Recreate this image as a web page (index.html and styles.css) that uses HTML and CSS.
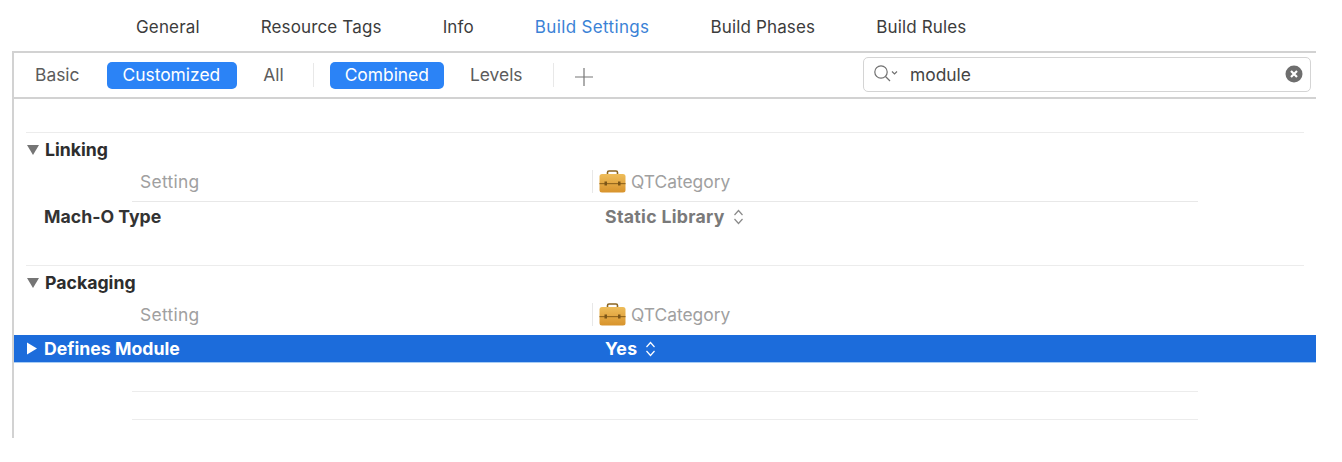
FILE: index.html
```html
<!DOCTYPE html>
<html lang="en">
<head>
  <meta charset="UTF-8" />
  <title>Build Settings</title>
  <link rel="stylesheet" href="styles.css">
</head>
<body>
  <nav class="tabs">
    <span class="tab">General</span>
    <span class="tab">Resource Tags</span>
    <span class="tab">Info</span>
    <span class="tab tab-active">Build Settings</span>
    <span class="tab">Build Phases</span>
    <span class="tab">Build Rules</span>
  </nav>

  <div class="panel">
    <div class="toolbar">
      <span class="filter filter-basic">Basic</span>
      <span class="filter filter-on filter-wide">Customized</span>
      <span class="filter filter-all">All</span>
      <span class="divider"></span>
      <span class="filter filter-on">Combined</span>
      <span class="filter filter-levels">Levels</span>
      <span class="divider divider-plus"></span>
      <svg class="plus" width="20" height="20" viewBox="0 0 20 20"><path d="M10 1v18M1 10h18" stroke="#777" stroke-width="1.2" fill="none"/></svg>
      <div class="search">
        <svg class="search-icon" width="26" height="20" viewBox="0 0 26 20">
          <circle cx="8" cy="8" r="6.2" stroke="#707070" stroke-width="1.2" fill="none"/>
          <path d="M12.500 12.500l4.500 4.500" stroke="#707070" stroke-width="1.300" fill="none"/>
          <path d="M19 7.500l2.500 2.500 2.500-2.500" stroke="#707070" stroke-width="1.200" fill="none"/>
        </svg>
        <span class="search-text">module</span>
        <svg class="search-clear" width="18" height="18" viewBox="0 0 18 18">
          <circle cx="9" cy="9" r="8.500" fill="#6e6e6e"/>
          <path d="M6 6l6 6M12 6l-6 6" stroke="#fff" stroke-width="2.200" fill="none"/>
        </svg>
      </div>
    </div>

    <div class="content">
      <section class="group">
        <div class="group-title">
          <svg class="arrow" width="12" height="12" viewBox="0 0 12 12"><path d="M0 1h12L6 11z" fill="#757575"/></svg>
          <span>Linking</span>
        </div>
        <div class="head-row">
          <span class="col-setting">Setting</span>
          <span class="col-target">
            <svg class="case" width="27" height="23" viewBox="0 0 27 23">
              <defs>
                <linearGradient id="caseFill" x1="0" y1="0" x2="0" y2="1">
                  <stop offset="0" stop-color="#eebd5a"/>
                  <stop offset="1" stop-color="#d8932c"/>
                </linearGradient>
              </defs>
              <path d="M8.500 5V2.500Q8.500 1 10 1h7Q18.500 1 18.500 2.500V5" stroke="#8a6420" stroke-width="1.600" fill="none"/>
              <rect x="0.500" y="4" width="26" height="18.500" rx="2.500" fill="url(#caseFill)"/>
              <rect x="0.500" y="13" width="26" height="1.200" fill="#96691f"/>
              <rect x="5.500" y="11.500" width="2.500" height="4" fill="#7a5518"/>
              <rect x="19" y="11.500" width="2.500" height="4" fill="#7a5518"/>
            </svg>
            QTCategory
          </span>
        </div>
        <div class="row">
          <span class="row-name">Mach-O Type</span>
          <span class="row-value">Static Library
            <svg class="stepper" width="11" height="16" viewBox="0 0 11 16"><path d="M1.500 6l4-4.500 4 4.500M1.500 10l4 4.500 4-4.500" stroke="#8a8a8a" stroke-width="1.200" fill="none"/></svg>
          </span>
        </div>
      </section>

      <section class="group">
        <div class="group-title">
          <svg class="arrow" width="12" height="12" viewBox="0 0 12 12"><path d="M0 1h12L6 11z" fill="#757575"/></svg>
          <span>Packaging</span>
        </div>
        <div class="head-row head-row-selected">
          <span class="col-setting">Setting</span>
          <span class="col-target">
            <svg class="case" width="27" height="23" viewBox="0 0 27 23">
              <path d="M8.500 5V2.500Q8.500 1 10 1h7Q18.500 1 18.500 2.500V5" stroke="#8a6420" stroke-width="1.600" fill="none"/>
              <rect x="0.500" y="4" width="26" height="18.500" rx="2.500" fill="url(#caseFill)"/>
              <rect x="0.500" y="13" width="26" height="1.200" fill="#96691f"/>
              <rect x="5.500" y="11.500" width="2.500" height="4" fill="#7a5518"/>
              <rect x="19" y="11.500" width="2.500" height="4" fill="#7a5518"/>
            </svg>
            QTCategory
          </span>
        </div>
        <div class="row row-selected">
          <svg class="arrow-right" width="12" height="13" viewBox="0 0 12 13"><path d="M1 0.500l10 6-10 6z" fill="#fff"/></svg>
          <span class="row-name">Defines Module</span>
          <span class="row-value">Yes
            <svg class="stepper" width="11" height="16" viewBox="0 0 11 16"><path d="M1.500 6l4-4.500 4 4.500M1.500 10l4 4.500 4-4.500" stroke="#fff" stroke-width="1.200" fill="none"/></svg>
          </span>
        </div>
        <div class="blank-row"></div>
        <div class="blank-row blank-row-last"></div>
      </section>
    </div>
  </div>
</body>
</html>
```

FILE: styles.css
```css
* {
  box-sizing: border-box;
}

body {
  margin: 0;
  height: 462px;
  overflow: hidden;
  background: #fff;
  font-family: "Inter", "Liberation Sans", sans-serif;
  font-size: 17.4px;
  color: #3c3c3c;
}

.tabs {
  display: flex;
  gap: 61px;
  height: 51px;
  padding: 16px 0 0 136px;
  line-height: 22px;
  font-size: 17px;
  letter-spacing: 0.15px;
}

.tab-active {
  color: #3a82d6;
  letter-spacing: 0.35px;
}

.panel {
  width: 1304px;
  margin-left: 12px;
  height: 387px;
  border-left: 2px solid #d2d2d2;
  border-top: 2px solid #d2d2d2;
}

.toolbar {
  display: flex;
  align-items: center;
  height: 46px;
  border-bottom: 2px solid #d2d2d2;
  color: #5c5c5c;
  padding: 0 5px 0 21px;
}

.filter {
  height: 27px;
  line-height: 26px;
  border-radius: 5px;
}

.filter-basic { margin-right: 28px; }
.filter-all { margin: 0 29px 0 26px; }
.filter-levels { margin: 0 30px 0 26px; }

.filter-on {
  padding: 0 15px;
  background: #2b83f6;
  color: #fff;
}

.filter-wide {
  padding-right: 17px;
}

.divider {
  width: 1px;
  height: 24px;
  background: #e8e8e8;
  margin-right: 16px;
}

.divider-plus {
  margin-right: 20px;
}

.plus {
  margin-top: 3px;
}

.search {
  display: flex;
  align-items: center;
  width: 448px;
  height: 35px;
  margin: 0 0 2px auto;
  padding: 0 7px 0 9px;
  border: 1px solid #d4d4d4;
  border-radius: 5px;
  background: #fff;
}

.search-text {
  margin-left: 11px;
  color: #444;
}

.search-clear {
  margin-left: auto;
}

.content {
  padding-top: 33px;
}

.group {
  border-top: 1px solid #ececec;
  margin: 0 12px;
  height: 133px;
}

.group-title {
  display: flex;
  align-items: center;
  height: 33px;
  padding-left: 1px;
  font-weight: 700;
  font-size: 17.7px;
  color: #2d2d2d;
}

.arrow {
  margin-right: 6px;
}

.head-row {
  display: flex;
  align-items: center;
  height: 36px;
  padding-bottom: 4px;
  margin: 0 106px 0 106px;
  border-bottom: 1px solid #e8e8e8;
  color: #a0a0a0;
}

.col-setting {
  width: 460px;
  padding-left: 8px;
  letter-spacing: 0.3px;
}

.col-target {
  display: flex;
  align-items: center;
  gap: 5px;
  border-left: 1px solid #e8e8e8;
  padding-left: 6px;
}

.row {
  display: flex;
  align-items: center;
  height: 29px;
  margin-right: 106px;
  font-weight: 700;
  font-size: 17.7px;
  color: #333;
}

.row-name {
  width: 579px;
  padding-left: 18px;
  flex: none;
}

.row-value {
  display: flex;
  align-items: center;
  gap: 8px;
  color: #7a7a7a;
  letter-spacing: 0.3px;
}

.head-row-selected {
  padding-bottom: 5px;
  border-bottom: none;
}

.row-selected {
  height: 28px;
  margin: 0 -12px;
  padding-left: 12px;
  background: #1c6cdb;
  border-bottom: 1px solid #a8cdf5;
  color: #fff;
}

.row-selected .row-name {
  width: 567px;
  padding-left: 6px;
}

.row-selected .row-value {
  color: #fff;
}

.blank-row {
  height: 29px;
  margin: 0 106px 0 106px;
  border-bottom: 1px solid #ececec;
}

.blank-row-last {
  height: 28px;
}
```
